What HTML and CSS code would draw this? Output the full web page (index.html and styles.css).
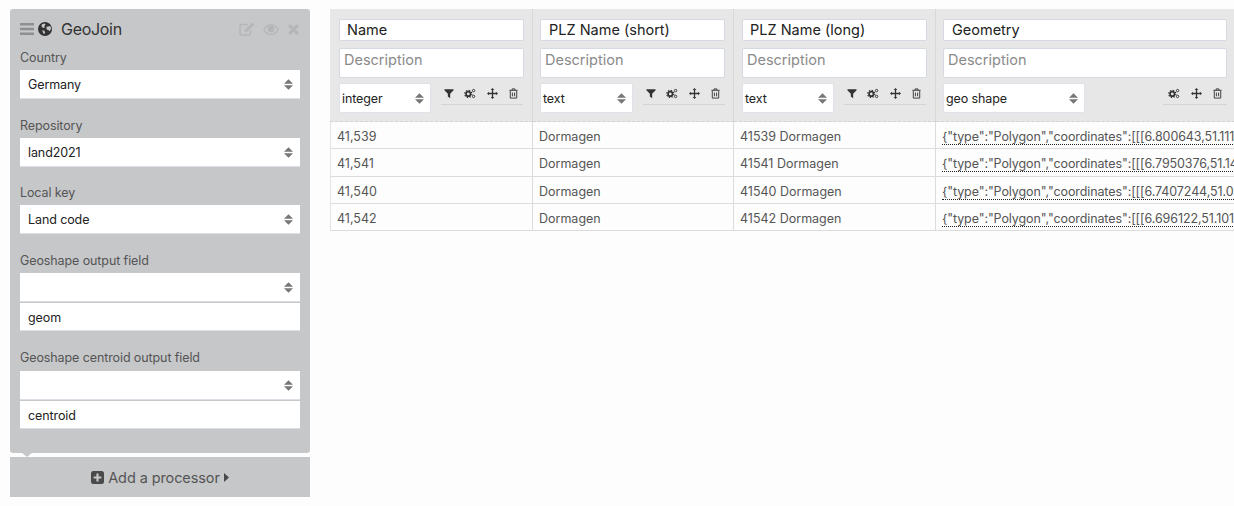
FILE: index.html
```html
<!DOCTYPE html>
<html lang="en">
<head>
<meta charset="utf-8">
<title>GeoJoin</title>
<link rel="stylesheet" href="styles.css">
</head>
<body>
<svg class="defs" width="0" height="0" aria-hidden="true">
  <symbol id="i-arrows" viewBox="0 0 12 14"><path d="M6 0l6 6H0zM6 14L0 8h12z"/></symbol>
  <symbol id="i-filter" viewBox="0 0 12 12"><path d="M.5 1h11v1.2L7.4 6.4V11.6L4.6 9.6V6.4L.5 2.2z"/></symbol>
  <symbol id="i-cogs" viewBox="0 0 14 12"><circle cx="5" cy="6.5" r="2.6" fill="none" stroke="currentColor" stroke-width="2"/><circle cx="5" cy="6.5" r="4.2" fill="none" stroke="currentColor" stroke-width="1.3" stroke-dasharray="1.6 1.7"/><circle cx="11.2" cy="2.6" r="1.4" fill="none" stroke="currentColor" stroke-width="1.1"/><circle cx="11.2" cy="9.4" r="1.4" fill="none" stroke="currentColor" stroke-width="1.1"/></symbol>
  <symbol id="i-move" viewBox="0 0 12 12"><path d="M6 0l2 2.2H6.700v3.100h3.100V4L12 6 9.800 8V6.700H6.700v3.100H8L6 12 4 9.800h1.300V6.700H2.200V8L0 6l2.200-2v1.300h3.100V2.200H4z"/></symbol>
  <symbol id="i-trash" viewBox="0 0 12 12"><path fill="none" stroke="currentColor" d="M2.500 3v8h7V3M1.500 2.500h9M4.500 2.500V1h3v1.500M4.800 5v4M7.200 5v4"/></symbol>
</svg>

<div class="page">
  <aside class="sidebar">
    <section class="panel">
      <header class="panel-head">
        <svg class="i-bars" viewBox="0 0 14 12"><path d="M0 0h14v2.500H0zM0 4.750h14v2.500H0zM0 9.500h14V12H0z"/></svg>
        <svg class="i-globe" viewBox="0 0 14 14"><circle cx="7" cy="7" r="7"/><path fill="#c6c7c9" d="M4 2.200l2.600-.8 1 1.300-1.300 1.200.6 1.500-1.800.5L3.400 4.300zM8.500 4.800l3.900-.9.700 2.800-1.500 2.600-1.300-1.200-1.700-.6zM4.200 8.200l2.200.6.700 1.600-1 1.900-1.100-1.600z"/></svg>
        <h1 class="panel-title">GeoJoin</h1>
        <div class="panel-tools">
          <svg class="i-edit" viewBox="0 0 16 14"><path fill="none" stroke="currentColor" stroke-width="1.500" d="M11.500 8v3.500a1.500 1.500 0 0 1-1.500 1.500H2.500A1.500 1.500 0 0 1 1 11.500V4a1.500 1.500 0 0 1 1.500-1.500H9"/><path d="M13.400.4l2 2-7.300 7.300-2.600.6.600-2.600z"/></svg>
          <svg class="i-eye" viewBox="0 0 16 11"><path fill-rule="evenodd" d="M8 0c3.400 0 6.300 2.200 8 5.500C14.300 8.800 11.400 11 8 11S1.700 8.800 0 5.500C1.700 2.200 4.600 0 8 0zM8 1.300C5.400 1.300 3 2.900 1.400 5.500 3 8.100 5.400 9.700 8 9.700s5-1.600 6.600-4.200C13 2.900 10.600 1.300 8 1.300z"/><circle cx="8" cy="4.800" r="3.500"/></svg>
          <svg class="i-times" viewBox="0 0 11 11"><path d="M2.300 0l3.200 3.200L8.700 0 11 2.300 7.800 5.500 11 8.700 8.700 11 5.500 7.800 2.300 11 0 8.700l3.200-3.200L0 2.300z"/></svg>
        </div>
      </header>

      <div class="field field-country">
        <label class="field-label">Country</label>
        <div class="select"><span>Germany</span><svg class="updown"><use href="#i-arrows"/></svg></div>
      </div>
      <div class="field">
        <label class="field-label">Repository</label>
        <div class="select"><span>land2021</span><svg class="updown"><use href="#i-arrows"/></svg></div>
      </div>
      <div class="field">
        <label class="field-label">Local key</label>
        <div class="select"><span>Land code</span><svg class="updown"><use href="#i-arrows"/></svg></div>
      </div>
      <div class="field field-geo">
        <label class="field-label">Geoshape output field</label>
        <div class="select"><span></span><svg class="updown"><use href="#i-arrows"/></svg></div>
        <input class="text-input" type="text" value="geom">
      </div>
      <div class="field field-centroid">
        <label class="field-label">Geoshape centroid output field</label>
        <div class="select"><span></span><svg class="updown"><use href="#i-arrows"/></svg></div>
        <input class="text-input" type="text" value="centroid">
      </div>
      <span class="panel-tail"></span>
    </section>

    <button class="add-processor" type="button">
      <svg class="i-plus" viewBox="0 0 13 13"><path fill-rule="evenodd" d="M2.500 0h8A2.500 2.500 0 0 1 13 2.500v8a2.500 2.500 0 0 1-2.500 2.500h-8A2.500 2.500 0 0 1 0 10.500v-8A2.500 2.500 0 0 1 2.500 0zM5.400 2.600v2.800H2.600v2.200h2.800v2.800h2.200V7.600h2.800V5.400H7.600V2.600z"/></svg>
      <span>Add a processor</span>
      <svg class="i-caret" viewBox="0 0 5 9"><path d="M0 0l5 4.500L0 9z"/></svg>
    </button>
  </aside>

  <main class="table">
    <div class="head-cell head-first">
      <input class="name-input" type="text" value="Name">
      <input class="desc-input" type="text" placeholder="Description">
      <div class="type-row">
        <div class="type-select"><span>integer</span><svg class="updown"><use href="#i-arrows"/></svg></div>
        <div class="tools">
          <svg class="tool i-filter"><use href="#i-filter"/></svg>
          <svg class="tool i-cog"><use href="#i-cogs"/></svg>
          <svg class="tool"><use href="#i-move"/></svg>
          <svg class="tool"><use href="#i-trash"/></svg>
        </div>
      </div>
    </div>
    <div class="head-cell head-second">
      <input class="name-input" type="text" value="PLZ Name (short)">
      <input class="desc-input" type="text" placeholder="Description">
      <div class="type-row">
        <div class="type-select"><span>text</span><svg class="updown"><use href="#i-arrows"/></svg></div>
        <div class="tools">
          <svg class="tool i-filter"><use href="#i-filter"/></svg>
          <svg class="tool i-cog"><use href="#i-cogs"/></svg>
          <svg class="tool"><use href="#i-move"/></svg>
          <svg class="tool"><use href="#i-trash"/></svg>
        </div>
      </div>
    </div>
    <div class="head-cell">
      <input class="name-input" type="text" value="PLZ Name (long)">
      <input class="desc-input" type="text" placeholder="Description">
      <div class="type-row">
        <div class="type-select"><span>text</span><svg class="updown"><use href="#i-arrows"/></svg></div>
        <div class="tools">
          <svg class="tool i-filter"><use href="#i-filter"/></svg>
          <svg class="tool i-cog"><use href="#i-cogs"/></svg>
          <svg class="tool"><use href="#i-move"/></svg>
          <svg class="tool"><use href="#i-trash"/></svg>
        </div>
      </div>
    </div>
    <div class="head-cell head-last">
      <input class="name-input" type="text" value="Geometry">
      <input class="desc-input" type="text" placeholder="Description">
      <div class="type-row">
        <div class="type-select type-wide"><span>geo shape</span><svg class="updown"><use href="#i-arrows"/></svg></div>
        <div class="tools tools-three">
          <svg class="tool i-cog"><use href="#i-cogs"/></svg>
          <svg class="tool"><use href="#i-move"/></svg>
          <svg class="tool"><use href="#i-trash"/></svg>
        </div>
      </div>
    </div>

    <div class="cell">41,539</div><div class="cell">Dormagen</div><div class="cell">41539 Dormagen</div><div class="cell cell-geo"><span>{"type":"Polygon","coordinates":[[[6.800643,51.1117,0]]]}</span></div>
    <div class="cell">41,541</div><div class="cell">Dormagen</div><div class="cell">41541 Dormagen</div><div class="cell cell-geo"><span>{"type":"Polygon","coordinates":[[[6.7950376,51.14,0]]]}</span></div>
    <div class="cell">41,540</div><div class="cell">Dormagen</div><div class="cell">41540 Dormagen</div><div class="cell cell-geo"><span>{"type":"Polygon","coordinates":[[[6.7407244,51.09,0]]]}</span></div>
    <div class="cell">41,542</div><div class="cell">Dormagen</div><div class="cell">41542 Dormagen</div><div class="cell cell-geo"><span>{"type":"Polygon","coordinates":[[[6.696122,51.101,0]]]}</span></div>
  </main>
</div>
</body>
</html>
```

FILE: styles.css
```css
* { box-sizing: border-box; }
html, body { margin: 0; height: 100%; overflow: hidden; background: #fdfdfd; }
body { font-family: Inter, "Liberation Sans", sans-serif; color: #333; }
.defs { position: absolute; }

.page { display: flex; align-items: flex-start; gap: 20px; padding: 9px 0 0 10px; width: 1300px; }

.sidebar { width: 300px; flex: none; }
.panel { position: relative; height: 444px; padding: 0 10px; background: #c6c7c9; border-radius: 3px; }
.panel-tail { position: absolute; left: 12px; bottom: -4px; width: 0; height: 0; border-left: 5px solid transparent; border-right: 5px solid transparent; border-top: 4px solid #c6c7c9; }

.panel-head { display: flex; align-items: center; height: 40px; }
.i-bars { width: 14px; height: 12px; fill: #8e8f91; }
.i-globe { width: 14px; height: 14px; margin-left: 4px; fill: #333; }
.panel-title { margin: 0 0 0 9px; font-size: 16px; font-weight: 400; color: #333; letter-spacing: -.3px; }
.panel-tools { display: flex; align-items: center; margin-left: auto; color: #b5b6b8; fill: #b5b6b8; }
.i-edit { width: 16px; height: 14px; }
.i-eye { width: 16px; height: 11px; margin-left: 8px; }
.i-times { width: 11px; height: 11px; margin-left: 9px; margin-right: 1px; }

.field { margin-bottom: 17px; }
.field-country { margin-bottom: 18px; }
.field-label { display: block; height: 21px; line-height: 18px; font-size: 12.5px; color: #555; letter-spacing: -.1px; }
.select, .text-input { display: flex; align-items: center; justify-content: space-between; width: 280px; height: 29px; padding: 0 7px 0 8px; background: #fff; border: 0; border-bottom: 1px solid #dcdfe6; font: 12.500px Inter, "Liberation Sans", sans-serif; color: #222; letter-spacing: -.1px; }
.text-input { display: block; outline: none; margin-top: 1px; height: 28px; padding-top: 2px; }
.field-geo .field-label { height: 22px; line-height: 20px; }
.field-centroid .field-label { height: 23px; line-height: 20px; }
.updown { width: 9px; height: 11px; fill: #777; }

.add-processor { display: flex; align-items: center; justify-content: center; width: 300px; height: 40px; margin-top: 4px; border: 0; padding: 1px 0 0; background: #c6c7c9; color: #555; font: 14.500px Inter, "Liberation Sans", sans-serif; letter-spacing: -.1px; }
.i-plus { width: 13px; height: 13px; fill: #4a4a4a; margin-right: 4px; }
.i-caret { width: 5px; height: 9px; fill: #4a4a4a; margin-left: 4px; }

.table { display: grid; grid-template-columns: 203px 201px 202px 299px; grid-template-rows: 113px 27px 28px 27px 27px; flex: none; }
.head-cell { padding: 10px 8px 0 8px; background: #e7e7e7; border-right: 1px solid #d8d8d8; border-bottom: 1px dashed #d2d2d2; }
.head-first { padding-left: 9px; }
.head-second { padding-left: 7px; }
.head-second .type-select { width: 93px; }
.head-second .name-input, .head-last .name-input { padding-left: 8px; }
.head-last { padding-left: 7px; border-right: 0; }
.name-input, .desc-input { display: block; width: 100%; border: 1px solid #d5dae2; background: #fff; border-radius: 2px; outline: none; font-family: inherit; color: #222; letter-spacing: 0; }
.name-input { height: 22px; padding: 0 7px 2px; font-size: 14.500px; }
.desc-input { height: 30px; margin-top: 7px; padding: 0 4px 8px; font-size: 14.500px; }
.desc-input::placeholder { color: #8a8a8a; opacity: 1; }
.type-row { display: flex; margin-top: 5px; }
.type-select { display: flex; align-items: center; justify-content: space-between; width: 92px; height: 30px; padding: 0 4px 0 2px; background: #fff; border: 1px solid #dfe2e8; border-radius: 2px; font-size: 12.500px; color: #222; letter-spacing: -.1px; }
.type-select .updown { margin-right: 2px; }
.type-wide { width: 142px; }
.tools { display: flex; align-items: center; justify-content: space-between; width: 82px; height: 22px; margin-left: 10px; padding: 0 4px 0 3px; border-bottom: 1px solid #d4d4d4; color: #333; fill: #333; }
.tools-three { width: 64px; margin-left: auto; padding-left: 5px; }
.tool { width: 11px; height: 11px; flex: none; }
.i-filter { width: 10px; }
.i-cog { width: 12px; }

.cell { padding: 7px 8px 0 6px; border-right: 1px solid #dcdcdc; border-bottom: 1px solid #dcdcdc; font-size: 12.500px; color: #555; letter-spacing: 0; white-space: nowrap; overflow: hidden; }
.cell:nth-child(4n + 1) { border-left: 1px solid #e4e4e4; }
.cell-geo { border-right: 0; letter-spacing: -.1px; }
.cell-geo span { border-bottom: 1px dotted #222; }
```
